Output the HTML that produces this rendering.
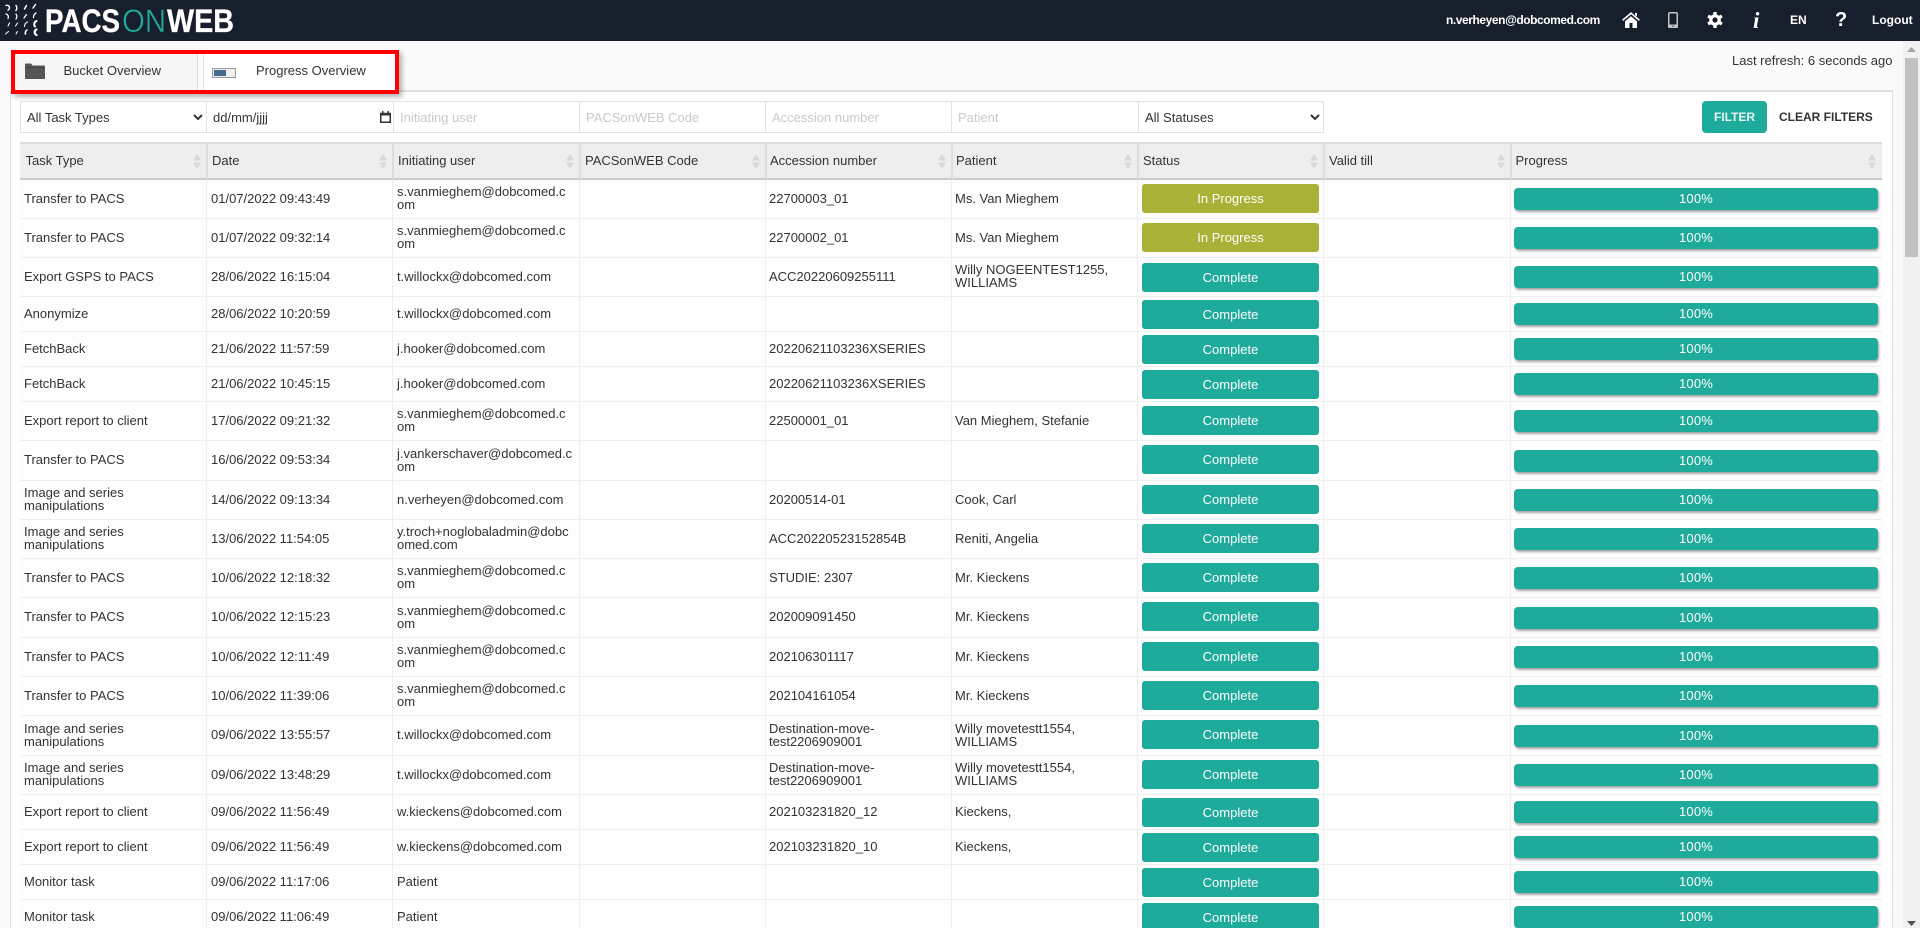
<!DOCTYPE html>
<html lang="en"><head><meta charset="utf-8"><title>PACSonWEB</title>
<style>
*{box-sizing:border-box}
html,body{margin:0;padding:0;width:1920px;height:928px;overflow:hidden;background:#fafafa;font-family:"Liberation Sans",Arial,sans-serif;font-size:13px;color:#333}
#app{position:absolute;left:0;top:0;width:1920px;height:928px;overflow:hidden;background:#fafafa}
.abs{position:absolute}
#hdr{position:absolute;left:0;top:0;width:1920px;height:41px;background:#161f2b;color:#fff}
#hdr .t{position:absolute;top:0;line-height:41px;font-weight:bold;font-size:12px;white-space:nowrap}
#panel{position:absolute;left:10px;top:90px;width:1883px;height:838px;background:#fff;border:2px solid #e0e0e0;border-bottom:0;border-right-width:1px;border-left-width:1px}
#tabs{position:absolute;left:11px;top:50px;width:388px;height:44px;border:4px solid #f00;background:#fff;box-shadow:3px 3px 5px rgba(0,0,0,.3)}
.f{position:absolute;top:101px;height:32px;border:1px solid #e2e2e2;background:#fff;line-height:31px;padding-left:6px;white-space:nowrap}
.ph{color:#c9c9c9}
select.f{padding:0 0 0 2px;font:13px "Liberation Sans",Arial,sans-serif;color:#333;outline:0;border-radius:0}
table{position:absolute;left:20px;top:142px;width:1862px;table-layout:fixed;border-collapse:separate;border-spacing:0;background:#fdfdfd}
th{height:38px;background:#eee;border-top:2px solid #ddd;border-bottom:2px solid #ccc;border-right:2px solid #ddd;font-weight:normal;text-align:left;padding:0 0 2px 4px;position:relative}
th:first-child{padding-left:5.5px}
th:nth-child(5),th:nth-child(6){padding-left:3px}
th:last-child{border-right:0;padding-left:3.5px}
th svg{position:absolute;right:5px;top:10px}
th:last-child svg{right:6px}
td{height:39px;border-bottom:1px solid #eee;padding:0 0 2px 3px;line-height:13px;white-space:nowrap;vertical-align:middle;overflow:hidden;background:linear-gradient(#eee,#eee) no-repeat right 1px top/1px 100%}
td:first-child{padding-left:4px}
td:nth-child(5),td:nth-child(6){padding-left:2px}
td:last-child{background:none;padding-left:2px}
.s td{height:35px}.l td{height:40px}
.st,.pr{display:block;color:#fff;text-align:center}
.st{width:177px;height:29px;line-height:29px;border-radius:3px;background:#1eab9b;position:relative}
.s .st{top:1px}
.st.y{background:#a9b237}
.pr{width:364px;height:22px;line-height:21px;border-radius:4px;background:#1eab9b;box-shadow:1px 2px 2px rgba(0,0,0,.35);letter-spacing:.2px;position:relative;top:1px}
</style></head><body>
<div id="app">
<div id="hdr">
<svg class="abs" style="left:3px;top:2px" width="240" height="38" viewBox="0 0 240 38">
<g fill="none" stroke="#fff" stroke-linecap="round">
<path stroke-width="1.500" d="M3 3.500a2.400 2.400 0 0 1 2 4.500M13 3.500a4.500 4.500 0 0 1 0 5M23.500 3.500l-2 3.500M32.500 2.500l-2.500 3.500"/>
<path stroke-width="1.300" d="M3 12a3 3 0 0 1 2 4.500M13 12a4.500 4.500 0 0 1 0 5M23.500 12.500l-2.500 3.500M33 11a5 5 0 0 0-2.500 4.500"/>
<path stroke-width="1.100" d="M6.500 21l-1.500 3M14.500 21l-2 3M24.500 20a5 5 0 0 0-3 4.500"/>
<path stroke-width="2" d="M33.500 19a3.500 3.500 0 0 0-1.500 5.500"/>
<path stroke-width="1" d="M5.500 29.500l-3 2.500M14.500 29.500l-1.500 2.500"/>
<path stroke-width="1.600" d="M24 28a3.500 3.500 0 0 0-1.500 4"/>
<path stroke-width="2.200" d="M33.500 27.500a3 3 0 0 0 0 5.500"/>
</g>
<text x="42" y="30" font-family="Liberation Sans" font-weight="bold" font-size="32" fill="#fff" stroke="#fff" stroke-width=".3" textLength="75" lengthAdjust="spacingAndGlyphs">PACS</text>
<text x="119" y="30" font-family="Liberation Sans" font-size="32" fill="#1eab9b" stroke="#161f2b" stroke-width=".5" textLength="44" lengthAdjust="spacingAndGlyphs">ON</text>
<text x="164" y="30" font-family="Liberation Sans" font-weight="bold" font-size="32" fill="#fff" stroke="#fff" stroke-width=".3" textLength="67" lengthAdjust="spacingAndGlyphs">WEB</text>
</svg>
<span class="t" style="left:1446px;letter-spacing:-.43px">n.verheyen@dobcomed.com</span>
<svg class="abs" style="left:1622px;top:12px" width="18" height="16" viewBox="0 0 18 16"><path fill="#fff" d="M13 1h2v3.500l-2-1.600zM3 9.300L9 4.300l6 5V16h-4.500v-5h-3v5H3z"/><path fill="none" stroke="#fff" stroke-width="1.600" d="M.6 8.200L9 1.200l8.400 7"/></svg>
<svg class="abs" style="left:1668px;top:12px" width="10" height="16" viewBox="0 0 10 16"><rect x=".75" y=".75" width="8.500" height="14.500" rx="1" fill="#161f2b" stroke="#c4c4c4" stroke-width="1.500"/><rect x="0" y="12.500" width="10" height="3.500" rx="1" fill="#c4c4c4"/><rect x="4" y="13.500" width="2" height="1" fill="#555"/></svg>
<svg class="abs" style="left:1707px;top:12px" width="16" height="16" viewBox="-8 -8 16 16"><g fill="#fff"><rect x="-1.700" y="-8" width="3.400" height="16" rx=".6"/><rect x="-1.700" y="-8" width="3.400" height="16" rx=".6" transform="rotate(60)"/><rect x="-1.700" y="-8" width="3.400" height="16" rx=".6" transform="rotate(120)"/><circle r="5.800"/></g><circle r="2.600" fill="#161f2b"/></svg>
<span class="t" style="left:1753px;font:italic bold 23px 'Liberation Serif',serif;line-height:41px">i</span>
<span class="t" style="left:1790px">EN</span>
<span class="t" style="left:1835px;font-size:20px">?</span>
<span class="t" style="left:1872px">Logout</span>
</div>

<div class="abs" style="left:1732px;top:53px;white-space:nowrap">Last refresh: 6 seconds ago</div>

<div id="panel"></div>

<div id="tabs">
<div class="abs" style="left:0;top:0;width:183px;height:36px;background:#f6f6f6;border-right:1px solid #ddd"></div>
<div class="abs" style="left:183px;top:0;width:6px;height:36px;background:#fafafa;border-right:1px solid #e4e4e4"></div>
<svg class="abs" style="left:10px;top:9px" width="20" height="16" viewBox="0 0 20 16"><path fill="#555" d="M0 1.500Q0 .5 1 .5h5l1.500 2H19q1 0 1 1V15q0 1-1 1H1q-1 0-1-1z"/><path fill="#444" d="M0 4h20v1H0z"/></svg>
<div class="abs" style="left:48.500px;top:10px;line-height:14px;white-space:nowrap">Bucket Overview</div>
<svg class="abs" style="left:197px;top:14px" width="24" height="10" viewBox="0 0 24 10"><rect x=".5" y=".5" width="23" height="9" fill="#eee" stroke="#999"/><rect x="2" y="2" width="12" height="6" fill="#466a90"/></svg>
<div class="abs" style="left:241px;top:10px;line-height:14px;white-space:nowrap">Progress Overview</div>
</div>

<select class="f" style="left:20px;width:187px"><option>All Task Types</option></select>
<div class="f" style="left:206px;width:188px">dd/mm/jjjj<svg class="abs" style="left:173px;top:9px" width="11" height="12" viewBox="0 0 11 12"><path fill="none" stroke="#333" stroke-width="1.500" d="M.75 2.500h9.500v8.750H.75z"/><path fill="#333" d="M0 2h11v2.500H0zM2 0h1.500v2H2zM7.500 0H9v2H7.500z"/></svg></div>
<div class="f ph" style="left:393px;width:187px">Initiating user</div>
<div class="f ph" style="left:579px;width:187px">PACSonWEB Code</div>
<div class="f ph" style="left:765px;width:187px">Accession number</div>
<div class="f ph" style="left:951px;width:188px">Patient</div>
<select class="f" style="left:1138px;width:186px"><option>All Statuses</option></select>

<div class="abs" style="left:1702px;top:101px;width:65px;height:32px;border-radius:4px;background:#1eab9b;color:#e6f3ef;font-weight:bold;font-size:12px;line-height:32px;text-align:center">FILTER</div>
<div class="abs" style="left:1779px;top:101px;line-height:32px;font-weight:bold;font-size:12px;white-space:nowrap">CLEAR FILTERS</div>

<table>
<colgroup><col style="width:188px"><col style="width:186px"><col style="width:187px"><col style="width:186px"><col style="width:186px"><col style="width:186px"><col style="width:186px"><col style="width:187px"><col style="width:370px"></colgroup>
<thead><tr>
<th>Task Type<svg width="8" height="15" viewBox="0 0 8 15"><path fill="#d8d8d8" d="M4 0l4 6.500H0zM4 15L0 8.500h8z"/></svg></th>
<th>Date<svg width="8" height="15" viewBox="0 0 8 15"><path fill="#d8d8d8" d="M4 0l4 6.500H0zM4 15L0 8.500h8z"/></svg></th>
<th>Initiating user<svg width="8" height="15" viewBox="0 0 8 15"><path fill="#d8d8d8" d="M4 0l4 6.500H0zM4 15L0 8.500h8z"/></svg></th>
<th>PACSonWEB Code<svg width="8" height="15" viewBox="0 0 8 15"><path fill="#d8d8d8" d="M4 0l4 6.500H0zM4 15L0 8.500h8z"/></svg></th>
<th>Accession number<svg width="8" height="15" viewBox="0 0 8 15"><path fill="#d8d8d8" d="M4 0l4 6.500H0zM4 15L0 8.500h8z"/></svg></th>
<th>Patient<svg width="8" height="15" viewBox="0 0 8 15"><path fill="#d8d8d8" d="M4 0l4 6.500H0zM4 15L0 8.500h8z"/></svg></th>
<th>Status<svg width="8" height="15" viewBox="0 0 8 15"><path fill="#d8d8d8" d="M4 0l4 6.500H0zM4 15L0 8.500h8z"/></svg></th>
<th>Valid till<svg width="8" height="15" viewBox="0 0 8 15"><path fill="#d8d8d8" d="M4 0l4 6.500H0zM4 15L0 8.500h8z"/></svg></th>
<th>Progress<svg width="8" height="15" viewBox="0 0 8 15"><path fill="#d8d8d8" d="M4 0l4 6.500H0zM4 15L0 8.500h8z"/></svg></th>
</tr></thead>
<tbody>
<tr><td>Transfer to PACS</td><td>01/07/2022 09:43:49</td><td>s.vanmieghem@dobcomed.c<br>om</td><td></td><td>22700003_01</td><td>Ms. Van Mieghem</td><td><span class="st y">In Progress</span></td><td></td><td><span class="pr">100%</span></td></tr>
<tr><td>Transfer to PACS</td><td>01/07/2022 09:32:14</td><td>s.vanmieghem@dobcomed.c<br>om</td><td></td><td>22700002_01</td><td>Ms. Van Mieghem</td><td><span class="st y">In Progress</span></td><td></td><td><span class="pr">100%</span></td></tr>
<tr><td>Export GSPS to PACS</td><td>28/06/2022 16:15:04</td><td>t.willockx@dobcomed.com</td><td></td><td>ACC20220609255111</td><td>Willy NOGEENTEST1255,<br>WILLIAMS</td><td><span class="st" style="top:1px">Complete</span></td><td></td><td><span class="pr">100%</span></td></tr>
<tr class="s"><td>Anonymize</td><td>28/06/2022 10:20:59</td><td>t.willockx@dobcomed.com</td><td></td><td></td><td></td><td><span class="st">Complete</span></td><td></td><td><span class="pr">100%</span></td></tr>
<tr class="s"><td>FetchBack</td><td>21/06/2022 11:57:59</td><td>j.hooker@dobcomed.com</td><td></td><td>20220621103236XSERIES</td><td></td><td><span class="st">Complete</span></td><td></td><td><span class="pr">100%</span></td></tr>
<tr class="s"><td>FetchBack</td><td>21/06/2022 10:45:15</td><td>j.hooker@dobcomed.com</td><td></td><td>20220621103236XSERIES</td><td></td><td><span class="st">Complete</span></td><td></td><td><span class="pr">100%</span></td></tr>
<tr><td>Export report to client</td><td>17/06/2022 09:21:32</td><td>s.vanmieghem@dobcomed.c<br>om</td><td></td><td>22500001_01</td><td>Van Mieghem, Stefanie</td><td><span class="st">Complete</span></td><td></td><td><span class="pr">100%</span></td></tr>
<tr class="l"><td>Transfer to PACS</td><td>16/06/2022 09:53:34</td><td>j.vankerschaver@dobcomed.c<br>om</td><td></td><td></td><td></td><td><span class="st">Complete</span></td><td></td><td><span class="pr">100%</span></td></tr>
<tr><td>Image and series<br>manipulations</td><td>14/06/2022 09:13:34</td><td>n.verheyen@dobcomed.com</td><td></td><td>20200514-01</td><td>Cook, Carl</td><td><span class="st">Complete</span></td><td></td><td><span class="pr">100%</span></td></tr>
<tr><td>Image and series<br>manipulations</td><td>13/06/2022 11:54:05</td><td>y.troch+noglobaladmin@dobc<br>omed.com</td><td></td><td>ACC20220523152854B</td><td>Reniti, Angelia</td><td><span class="st">Complete</span></td><td></td><td><span class="pr">100%</span></td></tr>
<tr><td>Transfer to PACS</td><td>10/06/2022 12:18:32</td><td>s.vanmieghem@dobcomed.c<br>om</td><td></td><td>STUDIE: 2307</td><td>Mr. Kieckens</td><td><span class="st">Complete</span></td><td></td><td><span class="pr">100%</span></td></tr>
<tr class="l"><td>Transfer to PACS</td><td>10/06/2022 12:15:23</td><td>s.vanmieghem@dobcomed.c<br>om</td><td></td><td>202009091450</td><td>Mr. Kieckens</td><td><span class="st">Complete</span></td><td></td><td><span class="pr">100%</span></td></tr>
<tr><td>Transfer to PACS</td><td>10/06/2022 12:11:49</td><td>s.vanmieghem@dobcomed.c<br>om</td><td></td><td>202106301117</td><td>Mr. Kieckens</td><td><span class="st">Complete</span></td><td></td><td><span class="pr">100%</span></td></tr>
<tr><td>Transfer to PACS</td><td>10/06/2022 11:39:06</td><td>s.vanmieghem@dobcomed.c<br>om</td><td></td><td>202104161054</td><td>Mr. Kieckens</td><td><span class="st">Complete</span></td><td></td><td><span class="pr">100%</span></td></tr>
<tr class="l"><td>Image and series<br>manipulations</td><td>09/06/2022 13:55:57</td><td>t.willockx@dobcomed.com</td><td></td><td>Destination-move-<br>test2206909001</td><td>Willy movetestt1554,<br>WILLIAMS</td><td><span class="st">Complete</span></td><td></td><td><span class="pr">100%</span></td></tr>
<tr><td>Image and series<br>manipulations</td><td>09/06/2022 13:48:29</td><td>t.willockx@dobcomed.com</td><td></td><td>Destination-move-<br>test2206909001</td><td>Willy movetestt1554,<br>WILLIAMS</td><td><span class="st">Complete</span></td><td></td><td><span class="pr">100%</span></td></tr>
<tr class="s"><td>Export report to client</td><td>09/06/2022 11:56:49</td><td>w.kieckens@dobcomed.com</td><td></td><td>202103231820_12</td><td>Kieckens,</td><td><span class="st">Complete</span></td><td></td><td><span class="pr">100%</span></td></tr>
<tr class="s"><td>Export report to client</td><td>09/06/2022 11:56:49</td><td>w.kieckens@dobcomed.com</td><td></td><td>202103231820_10</td><td>Kieckens,</td><td><span class="st">Complete</span></td><td></td><td><span class="pr">100%</span></td></tr>
<tr class="s"><td>Monitor task</td><td>09/06/2022 11:17:06</td><td>Patient</td><td></td><td></td><td></td><td><span class="st">Complete</span></td><td></td><td><span class="pr">100%</span></td></tr>
<tr class="s"><td>Monitor task</td><td>09/06/2022 11:06:49</td><td>Patient</td><td></td><td></td><td></td><td><span class="st">Complete</span></td><td></td><td><span class="pr">100%</span></td></tr>
</tbody></table>

<div class="abs" style="left:1903px;top:41px;width:17px;height:887px;background:#f1f1f1"></div>
<div class="abs" style="left:1905px;top:58px;width:13px;height:199px;background:#c1c1c1"></div>
<svg class="abs" style="left:1907px;top:47px" width="9" height="5" viewBox="0 0 9 5"><path fill="#a3a3a3" d="M4.500 0L9 5H0z"/></svg>
<svg class="abs" style="left:1907px;top:921px" width="9" height="5" viewBox="0 0 9 5"><path fill="#505050" d="M0 0h9L4.500 5z"/></svg>
</div>
</body></html>
